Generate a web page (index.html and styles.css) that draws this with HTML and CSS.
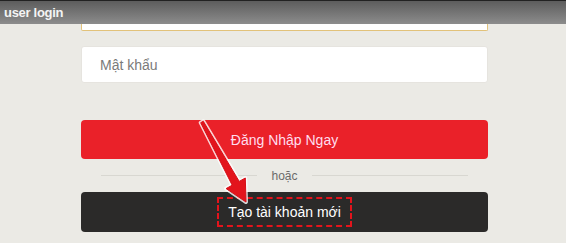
FILE: index.html
```html
<!DOCTYPE html>
<html lang="vi">
<head>
    <meta charset="UTF-8">
    <title>user login</title>
    <meta name="viewport" content="width=device-width, initial-scale=1.0">
    <link rel="stylesheet" href="styles.css">
</head>
<body>
<div class="titlebar">user login</div>

<div class="form">
    <div class="field-top"></div>
    <input type="password" class="field" placeholder="Mật khẩu" />
    <button class="btn btn-login">Đăng Nhập Ngay</button>
    <div class="divider"><span>hoặc</span></div>
    <button class="btn btn-register"><span class="mark">Tạo tài khoản mới</span></button>

    <svg class="arrow" width="566" height="243" viewBox="0 0 566 243">
        <polygon points="200.7,129.7 232.2,192.2 226.1,195.6 246,209 245.3,185 239.2,188.4 203.3,128.3"
                 fill="#fff" stroke="#fff" stroke-width="4" stroke-linejoin="round" opacity="0.8" />
        <polygon points="200.7,129.7 232.2,192.2 226.1,195.6 246,209 245.3,185 239.2,188.4 203.3,128.3"
                 fill="#e3141c" stroke="#d60f18" stroke-width="1" stroke-linejoin="round" />
    </svg>
</div>
</body>
</html>
```

FILE: styles.css
```css
body { margin: 0; background: #ebeae5; font-family: "Liberation Sans", Arial, sans-serif; }
.titlebar { height: 24px; line-height: 23px; padding-left: 4px; color: #f4f4f4; font-size: 13px; font-weight: bold; letter-spacing: -0.3px; background: linear-gradient(#5d5d5d, #8c8c8c); border-top: 1px solid #222; box-sizing: border-box; }
.form { position: relative; width: 407px; margin-left: 81px; }
.field-top { height: 6px; background: #fff; border: 1px solid #e2c27a; border-top: none; border-radius: 0 0 2px 2px; }
.field { display: block; width: 100%; height: 37px; margin-top: 15px; padding: 0 18px; box-sizing: border-box; border: 1px solid #e6e4df; border-radius: 3px; background: #fff; font-family: inherit; font-size: 14px; color: #333; }
.field::placeholder { color: #7a7a7a; }
.btn { display: flex; align-items: center; justify-content: center; width: 100%; border: none; border-radius: 4px; color: #fff; font-family: inherit; font-size: 14px; padding: 0; }
.btn-login { height: 39px; margin-top: 37px; background: #ea2129; color: #fde; }
.divider { display: flex; align-items: center; gap: 14px; height: 33px; padding: 0 20px; color: #6a6a6a; font-size: 12px; }
.divider::before, .divider::after { content: ""; flex: 1; border-top: 1px solid #d8d7d1; }
.btn-register { height: 40px; background: #2b2a29; }
.mark { padding: 5px 9px; border: 2px dashed #e3141c; line-height: 16px; }
.arrow { position: absolute; left: -81px; top: -31px; pointer-events: none; }
```
